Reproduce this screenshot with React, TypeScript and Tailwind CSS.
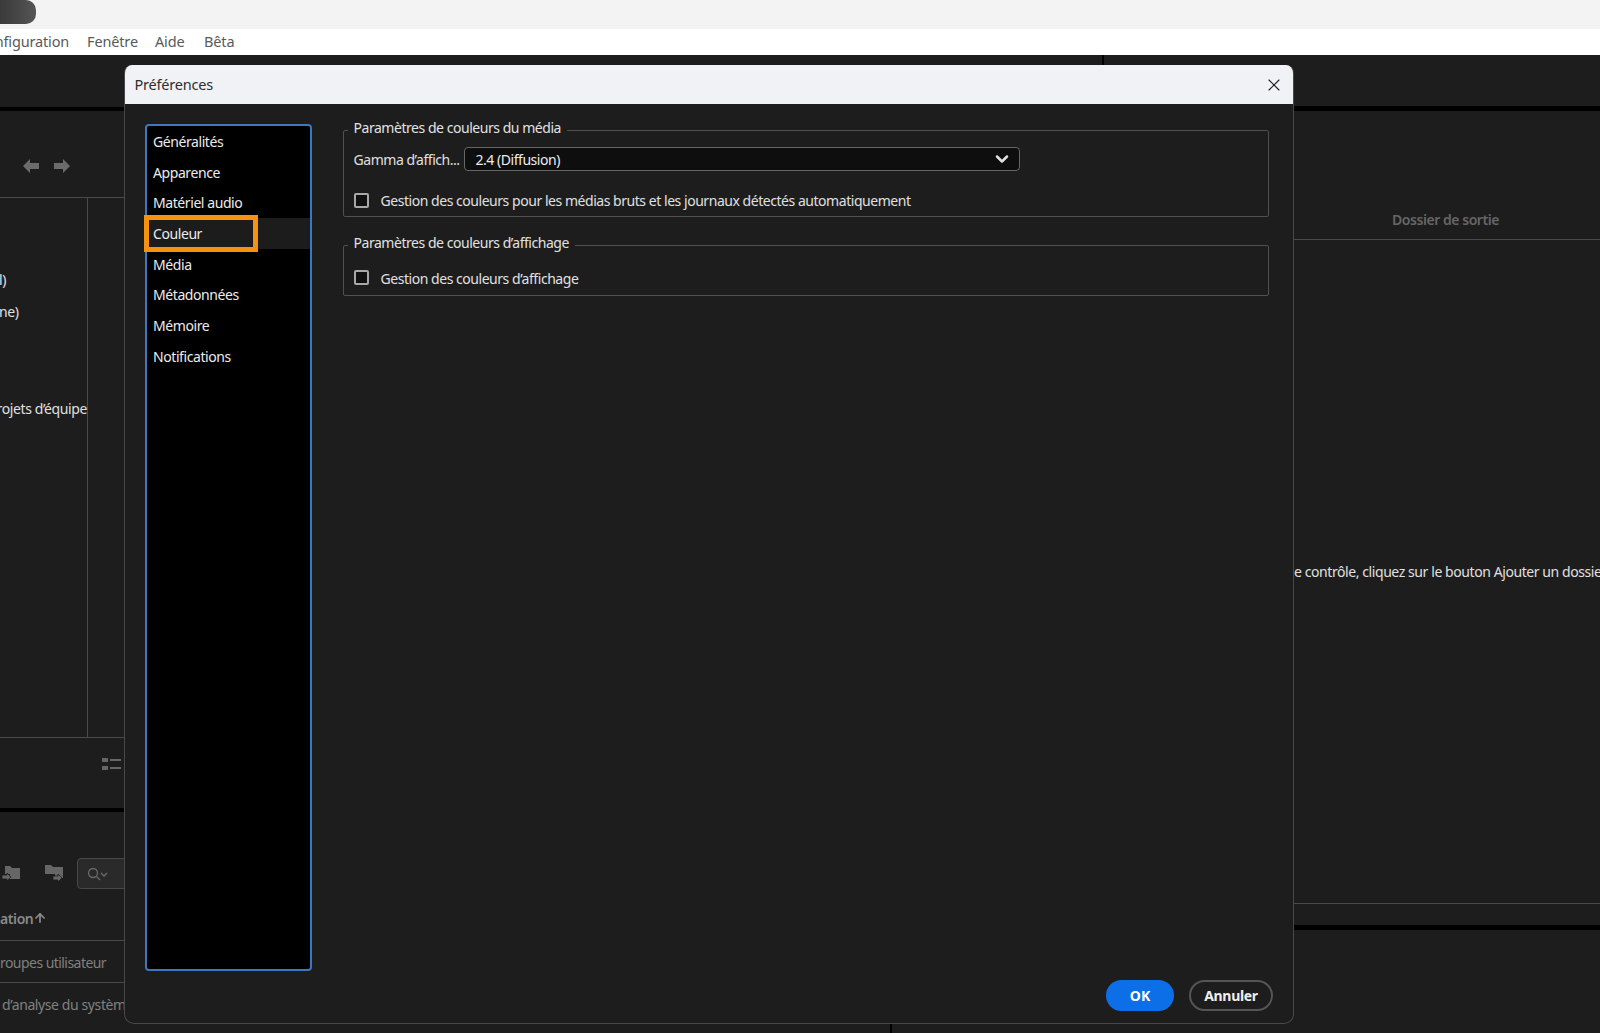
import { ChevronDown, X, ArrowUp } from 'lucide-react';

const FONT = "font-['Noto_Sans','Open_Sans',sans-serif]";

const prefItems = ['Généralités', 'Apparence', 'Matériel audio', 'Couleur', 'Média', 'Métadonnées', 'Mémoire', 'Notifications'];

const Arrow = ({ flip }: { flip?: boolean }) => (
  <svg width="16" height="14" viewBox="0 0 16 14" className={flip ? 'rotate-180' : ''}>
    <path d="M0 7 L7 0 L7 4 L16 4 L16 10 L7 10 L7 14 Z" fill="#6b6b6b" />
  </svg>
);

const FolderIn = () => (
  <svg width="18" height="16" viewBox="0 0 18 16" className="shrink-0">
    <path d="M3 0h5l2 2h8v11H8V8H3z" fill="#666666" />
    <path d="M0 9h5V7l4 4-4 4v-2H0z" fill="#666666" stroke="#1d1d1d" strokeWidth="0.8" />
  </svg>
);

const FolderOut = () => (
  <svg width="18" height="17" viewBox="0 0 18 17" className="shrink-0">
    <path d="M0 0h6l2 2h10v11h-8V9H0z" fill="#666666" />
    <path d="M8 11h5V9l4 4-4 4v-2H8z" fill="#666666" stroke="#1d1d1d" strokeWidth="0.8" />
  </svg>
);

const Checkbox = ({ className = '' }: { className?: string }) => (
  <span className={`w-[15px] h-[15px] shrink-0 rounded-[2px] border-2 border-[#a8a8a8] bg-[#111111] ${className}`} />
);

const Group = ({ title, className, children }: { title: string; className: string; children: React.ReactNode }) => (
  <div className={`relative rounded-[2px] border-[1.5px] border-[#505050] px-[10px] ${className}`}>
    <span className="absolute left-[4px] -top-[13px] bg-[#1d1d1d] px-[6px] text-[14px] leading-[20px] tracking-[-0.46px] text-[#e2e2e2] whitespace-nowrap">
      {title}
    </span>
    {children}
  </div>
);

const LeftPanel = () => (
  <div className="w-[124px] shrink-0 overflow-hidden flex flex-col">
    <div className="h-[56px] shrink-0 border-b-[4px] border-black" />
    <div className="h-[87px] shrink-0 border-b-[1.5px] border-[#4a4a4a] flex items-center gap-[15px] pl-[23px] pt-[23px]">
      <Arrow />
      <Arrow flip />
    </div>
    <div className="h-[540px] shrink-0 border-b-[1.5px] border-[#4a4a4a] flex">
      <div className="w-[88px] shrink-0 border-r-[1.5px] border-[#4a4a4a] flex flex-col items-end overflow-hidden pt-[72px] text-[14px] leading-[20px] text-[#e0e0e0] tracking-[-0.4px]">
        <div className="w-[88px]">l)</div>
        <div className="w-[88px] mt-[12px]">ne)</div>
        <div className="whitespace-nowrap mt-[77px]">rojets d’équipe</div>
      </div>
    </div>
    <div className="h-[74px] shrink-0 border-b-[4px] border-black flex justify-end pr-[3px] pt-[20px]">
      <div className="w-[19px] h-[12px] grid grid-cols-[6px_1fr] gap-x-[2px] gap-y-[4px]">
        <span className="bg-[#666666] h-[4px]" />
        <span className="bg-[#666666] h-[2px] mt-[1px]" />
        <span className="bg-[#666666] h-[4px]" />
        <span className="bg-[#666666] h-[2px] mt-[1px]" />
      </div>
    </div>
    <div className="h-[46px] shrink-0" />
    <div className="h-[31px] shrink-0 flex items-center pl-[2px]">
      <FolderIn />
      <div className="w-[25px] shrink-0" />
      <FolderOut />
      <div className="ml-[14px] w-[60px] h-[31px] shrink-0 rounded-[4px] border border-[#484848] bg-[#2a2a2a] flex items-center pl-[9px]">
        <svg width="21" height="14" viewBox="0 0 21 14" fill="none" stroke="#6a6a6a" strokeWidth="1.3">
          <circle cx="6" cy="6" r="4.5" />
          <path d="M9.5 9.5 L13 13 M14 6 L17 9 L20 6" />
        </svg>
      </div>
    </div>
    <div className="h-[52px] shrink-0 border-b-[1.5px] border-[#4a4a4a] flex items-end pb-[11px] text-[14px] leading-[20px] font-semibold text-[#8a8a8a] tracking-[-0.4px]">
      <span>ation</span>
      <ArrowUp className="w-[14px] h-[14px] mb-[4px]" strokeWidth={3} />
    </div>
    <div className="h-[42px] shrink-0 border-b-[1.5px] border-[#4a4a4a] flex items-center pt-[2px] text-[14px] text-[#808080] tracking-[-0.55px] whitespace-nowrap">
      roupes utilisateur
    </div>
    <div className="flex-1 pt-[12px] pl-[2px] text-[14px] leading-[20px] text-[#808080] tracking-[-0.4px] whitespace-nowrap">
      d’analyse du système
    </div>
  </div>
);

const CenterPanel = () => (
  <div className="w-[1170px] shrink-0 flex flex-col">
    <div className="h-[10px] shrink-0 flex justify-end pr-[190px]">
      <span className="w-[2px] h-full bg-black" />
    </div>
    <div className="flex-1" />
    <div className="h-[9px] shrink-0 flex pl-[766px]">
      <span className="w-[2px] h-full bg-black" />
    </div>
  </div>
);

const RightPanel = () => (
  <div className="flex-1 min-w-0 overflow-hidden flex flex-col">
    <div className="h-[56px] shrink-0 border-b-[5px] border-black" />
    <div className="h-[129px] shrink-0 border-b-[1.5px] border-[#4a4a4a] flex items-end pb-[9px] pl-[98px] text-[14px] leading-[20px] font-semibold text-[#666666] tracking-[-0.45px]">
      Dossier de sortie
    </div>
    <div className="h-[664px] shrink-0 border-b-[1.5px] border-[#4a4a4a] pt-[322px] text-[14px] leading-[20px] text-[#e0e0e0] tracking-[-0.42px] whitespace-nowrap">
      e contrôle, cliquez sur le bouton Ajouter un dossier
    </div>
    <div className="h-[26px] shrink-0 border-b-[5px] border-black" />
  </div>
);

const PrefsDialog = () => (
  <div className="absolute left-[124px] top-[65px] w-[1170px] h-[959px] flex flex-col rounded-t-[8px] rounded-b-[10px] overflow-hidden border-x-[1.5px] border-b-[1.5px] border-[#484848] bg-[#1d1d1d]">
    <div className="h-[39px] shrink-0 bg-[#f0f2f6] flex items-center justify-between pl-[11px] pr-[11px] -mx-[1.5px]">
      <span className="text-[14.5px] tracking-[-0.2px] text-[#2e2e2e]">Préférences</span>
      <X className="w-[20px] h-[20px] text-[#222222]" strokeWidth={1.4} />
    </div>
    <div className="flex-1 min-h-0 flex">
      <div className="w-[167px] h-[847px] shrink-0 ml-[19.5px] mt-[20px] rounded-[4px] border-[2px] border-[#3b78c0] bg-black relative">
        {prefItems.map((item) => (
          <div
            key={item}
            className={`h-[30.7px] flex items-center pl-[6.5px] text-[14px] tracking-[-0.42px] text-[#ececec] ${item === 'Couleur' ? 'bg-[#1c1c1c]' : ''}`}
          >
            {item}
          </div>
        ))}
        {/* orange highlight around the selected row */}
        <div className="absolute -left-[3px] top-[89px] w-[114px] h-[37px] border-[5px] border-[#f5920f]" />
      </div>
      <div className="flex-1 min-w-0 flex flex-col">
        <div className="flex-1 pt-[26px] pl-[31px] pr-[24px] flex flex-col gap-[28px]">
          <Group title="Paramètres de couleurs du média" className="h-[87px] pt-[16px]">
            <div className="flex items-center h-[24px] text-[14px] tracking-[-0.46px] text-[#e0e0e0]">
              <span className="w-[110px] shrink-0 whitespace-nowrap">Gamma d’affich...</span>
              <div className="w-[556px] h-[24px] rounded-[4px] border-[1.5px] border-[#666666] bg-[#0e0e0e] flex items-center justify-between pl-[11px] pr-[7px] text-[#ececec]">
                <span>2.4 (Diffusion)</span>
                <ChevronDown className="w-[20px] h-[20px] text-[#e0e0e0]" strokeWidth={3} />
              </div>
            </div>
            <div className="flex items-center gap-[12px] mt-[17px] h-[24px] text-[14px] tracking-[-0.46px] text-[#e0e0e0]">
              <Checkbox />
              <span className="whitespace-nowrap">Gestion des couleurs pour les médias bruts et les journaux détectés automatiquement</span>
            </div>
          </Group>
          <Group title="Paramètres de couleurs d’affichage" className="h-[51px] pt-[20px]">
            <div className="flex items-center gap-[12px] h-[24px] text-[14px] tracking-[-0.46px] text-[#e0e0e0]">
              <Checkbox className="mb-[2px]" />
              <span className="whitespace-nowrap">Gestion des couleurs d’affichage</span>
            </div>
          </Group>
        </div>
        <div className="flex justify-end gap-[15px] pr-[20px] pb-[12px]">
          <button className="w-[68px] h-[31px] rounded-full bg-[#0d6fe8] text-[14px] font-bold text-white">OK</button>
          <button className="w-[84px] h-[31px] rounded-full border-2 border-[#555555] text-[14px] font-bold text-[#eeeeee] tracking-[-0.3px]">Annuler</button>
        </div>
      </div>
    </div>
  </div>
);

export default function App() {
  return (
    <div className={`relative w-[1600px] h-[1033px] overflow-hidden flex flex-col bg-[#1d1d1d] ${FONT}`}>
      {/* Window chrome */}
      <div className="h-[29px] shrink-0 bg-[#f3f3f3]">
        <div className="w-[36px] h-[24px] rounded-r-[10px] bg-gradient-to-r from-[#3a3a3a] to-[#555555]" />
      </div>
      <div className="h-[26px] shrink-0 bg-white flex items-center text-[14.5px] tracking-[-0.15px] text-[#595959] overflow-hidden">
        <span className="ml-[-23px] w-[110px] shrink-0 whitespace-nowrap">Configuration</span>
        <span className="w-[68px] shrink-0">Fenêtre</span>
        <span className="w-[49px] shrink-0">Aide</span>
        <span>Bêta</span>
      </div>

      <div className="flex-1 min-h-0 flex">
        <LeftPanel />
        <CenterPanel />
        <RightPanel />
      </div>

      <PrefsDialog />
    </div>
  );
}
